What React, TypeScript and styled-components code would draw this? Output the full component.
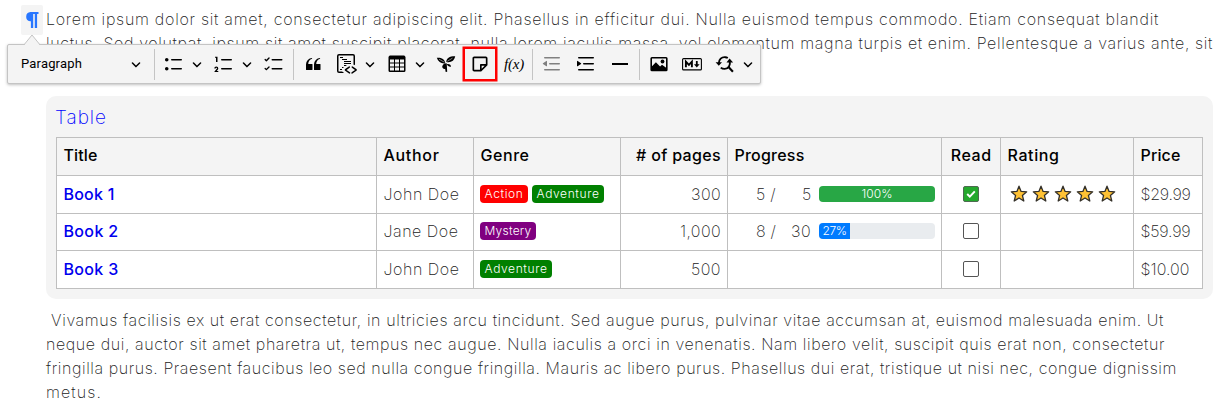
import React, { useLayoutEffect, useRef, useState } from "react";
import styled, { createGlobalStyle } from "styled-components";

const GlobalStyle = createGlobalStyle`
  *, *::before, *::after { box-sizing: border-box; }
  body {
    margin: 0;
    background: #fff;
    color: #222;
    font: 200 16px/24px Inter, "Open Sans", sans-serif;
    overflow: hidden;
  }
`;

/* ---------- text tracked out to a fixed measure ---------- */

const Tracked = styled.span`
  display: inline-block;
  white-space: pre;
`;

function Fit({ w, children }: { w: number; children: string }) {
  const ref = useRef<HTMLSpanElement>(null);
  const [spacing, setSpacing] = useState(0);
  useLayoutEffect(() => {
    if (ref.current) {
      const natural = ref.current.getBoundingClientRect().width;
      setSpacing((w - natural) / children.length);
    }
  }, [w, children]);
  return (
    <Tracked ref={ref} style={{ letterSpacing: spacing }}>
      {children}
    </Tracked>
  );
}

/* ---------- page ---------- */

const Page = styled.main`
  position: relative;
  width: 1218px;
  height: 403px;
  padding: 7px 5px 0 46px;
  overflow: hidden;
`;

const Paragraph = styled.p`
  margin: 0;
  display: flex;
  flex-direction: column;
  align-items: flex-start;
`;

const BlockHandle = styled.button`
  position: absolute;
  left: 21px;
  top: 5px;
  width: 22px;
  height: 30px;
  padding: 0;
  border: 0;
  border-radius: 2px;
  background: #f4f4f4;
  color: #2977ff;
  display: grid;
  place-items: center;
`;

/* ---------- toolbar ---------- */

const Toolbar = styled.div`
  position: absolute;
  left: 7px;
  top: 44px;
  width: 754px;
  height: 40px;
  display: flex;
  align-items: center;
  background: #f4f4f4;
  border: 1px solid #c4c4c4;
  border-radius: 2px;
  box-shadow: 0 1px 3px rgba(0, 0, 0, 0.25);
  color: #000;
`;

const Caret = styled.svg`
  position: absolute;
  left: 15px;
  top: -11px;
`;

const StyleSelect = styled.div`
  width: 144px;
  padding: 0 11px 0 13px;
  display: flex;
  align-items: center;
  justify-content: space-between;
  font: 400 13px/20px Roboto, sans-serif;
`;

const Tool = styled.button<{ $w?: number; $marked?: boolean; $dim?: boolean }>`
  flex: none;
  width: ${(p) => p.$w ?? 34}px;
  height: 34px;
  padding: 0;
  border: ${(p) => (p.$marked ? "2px solid #ff0000" : "0")};
  box-shadow: ${(p) => (p.$marked ? "0 0 0 0.5px #ff0000" : "none")};
  background: none;
  color: ${(p) => (p.$dim ? "#808080" : "#000")};
  display: flex;
  align-items: center;
  justify-content: center;
`;

const DropButton = styled.button<{ $w?: number }>`
  flex: none;
  width: ${(p) => p.$w ?? 16}px;
  height: 34px;
  padding: 0 0 0 1px;
  border: 0;
  background: none;
  color: #000;
  display: flex;
  align-items: center;
`;

const Divider = styled.span`
  flex: none;
  width: 1px;
  height: 31px;
  margin: 0 2px;
  background: #c4c4c4;
`;

const Formula = styled.span`
  padding-left: 1px;
  font: italic 400 15px/20px "Liberation Serif", serif;
  letter-spacing: -0.2px;
`;

const Icon = ({ d }: { d: string }) => (
  <svg width="20" height="20" viewBox="0 0 20 20" fill="currentColor">
    <path d={d} />
  </svg>
);

const Chevron = () => (
  <svg width="10" height="10" viewBox="0 0 10 10" fill="currentColor">
    <path d="M.941 4.523a.75.75 0 1 1 1.06-1.06l3.006 3.005 3.005-3.005a.75.75 0 1 1 1.06 1.06l-3.549 3.55a.75.75 0 0 1-1.168-.136L.941 4.523z" />
  </svg>
);

const bulleted =
  "M7 5.75c0 .414.336.75.75.75h9.5a.75.75 0 1 0 0-1.5h-9.5a.75.75 0 0 0-.75.75zm-6 0C1 4.784 1.777 4 2.75 4c.966 0 1.75.777 1.75 1.75 0 .966-.777 1.75-1.75 1.75C1.784 7.5 1 6.723 1 5.75zm6 9c0 .414.336.75.75.75h9.5a.75.75 0 1 0 0-1.5h-9.5a.75.75 0 0 0-.75.75zm-6 0c0-.966.777-1.75 1.75-1.75.966 0 1.75.777 1.75 1.75 0 .966-.777 1.75-1.75 1.75-.966 0-1.75-.777-1.75-1.75z";
const numbered =
  "M7 5.75c0 .414.336.75.75.75h9.5a.75.75 0 1 0 0-1.5h-9.5a.75.75 0 0 0-.75.75zM3.5 3v5H2V3.7H1v-1h2.5V3zM.343 17.857l2.59-3.257H2.92a.6.6 0 1 0-1.04 0H.302a2 2 0 1 1 3.995 0h-.001c-.048.405-.16.734-.333.988-.175.254-.59.692-1.244 1.312H4.3v1h-4l.043-.043zM7 14.75a.75.75 0 0 1 .75-.75h9.5a.75.75 0 1 1 0 1.5h-9.5a.75.75 0 0 1-.75-.75z";
const todo =
  "m2.315 14.705 2.224-2.24a.689.689 0 0 1 .963 0 .664.664 0 0 1 0 .949L2.865 16.07a.682.682 0 0 1-.112.089.647.647 0 0 1-.852-.051L.688 14.886a.635.635 0 0 1 0-.903.647.647 0 0 1 .91 0l.717.722zm5.185.045a.75.75 0 0 1 .75-.75h9.5a.75.75 0 1 1 0 1.5h-9.5a.75.75 0 0 1-.75-.75zM2.329 5.745l2.21-2.226a.689.689 0 0 1 .963 0 .664.664 0 0 1 0 .95L2.865 7.125a.682.682 0 0 1-.112.089.647.647 0 0 1-.852-.051L.688 5.94a.635.635 0 0 1 0-.903.647.647 0 0 1 .91 0l.73.708zM7.5 5.75A.75.75 0 0 1 8.25 5h9.5a.75.75 0 1 1 0 1.5h-9.5a.75.75 0 0 1-.75-.75z";
const quote =
  "M3 10.423a6.5 6.5 0 0 1 6.056-6.408l.038.67C6.448 5.423 5.354 7.663 5.22 10H9c.552 0 .5.432.5.986v4.511c0 .554-.448.503-1 .503h-5c-.552 0-.5-.449-.5-1.003v-4.574zm8 0a6.5 6.5 0 0 1 6.056-6.408l.038.67c-2.646.739-3.74 2.979-3.873 5.315H17c.552 0 .5.432.5.986v4.511c0 .554-.448.503-1 .503h-5c-.552 0-.5-.449-.5-1.003v-4.574z";
const codeBlock =
  "M12.87 12.61a.75.75 0 0 1-.089.976l-.085.07-3.154 2.254 3.412 2.414a.75.75 0 0 1 .237.95l-.057.095a.75.75 0 0 1-.95.237l-.096-.058-4.272-3.022-.003-1.223 4.01-2.867a.75.75 0 0 1 1.047.174zm2.795-.231.095.057 4.011 2.867-.003 1.224-4.272 3.022-.095.058a.75.75 0 0 1-.88-.151l-.07-.086-.058-.095a.75.75 0 0 1 .15-.88l.087-.07 3.412-2.414-3.154-2.253-.085-.071a.75.75 0 0 1 .862-1.207zM16 0a2 2 0 0 1 2 2v9.354l-.663-.492-.837-.001V2a.5.5 0 0 0-.5-.5H2a.5.5 0 0 0-.5.5v15a.5.5 0 0 0 .5.5h3.118L7.156 19H2a2 2 0 0 1-2-2V2a2 2 0 0 1 2-2h14zM5.009 15l.003 1H3v-1h2.009zm2.188-2-1.471 1H5v-1h2.197zM10 11v.095L8.668 12H7v-1h3zm4-2v1H7V9h7zm0-2v1H7V7h7zm-4-2v1H5V5h5zM6 3v1H3V3h3z";
const tableGrid =
  "M3 5.5v3h4v-3H3Zm0 4v3h4v-3H3Zm0 4v3h4v-3H3Zm5 3h4v-3H8v3Zm5 0h4v-3h-4v3Zm4-4v-3h-4v3h4Zm0-4v-3h-4v3h4Zm1.5 8A1.5 1.5 0 0 1 17 18H3a1.5 1.5 0 0 1-1.5-1.5V3c.222-.863 1.068-1.5 2-1.5h13c.932 0 1.778.637 2 1.5v13.5Zm-6.5-4v-3H8v3h4Zm0-4v-3H8v3h4Z";
const indentLines =
  "M2 3.75c0 .414.336.75.75.75h14.5a.75.75 0 1 0 0-1.5H2.75a.75.75 0 0 0-.75.75zm5 6c0 .414.336.75.75.75h9.5a.75.75 0 1 0 0-1.5h-9.5a.75.75 0 0 0-.75.75zM2.75 16.5h14.5a.75.75 0 1 0 0-1.5H2.75a.75.75 0 1 0 0 1.5z";
const indent =
  indentLines +
  "M1.632 6.95 5.02 9.358a.4.4 0 0 1-.013.661l-3.39 2.207A.4.4 0 0 1 1 11.892V7.275a.4.4 0 0 1 .632-.326z";
const outdent =
  indentLines +
  "M4.368 6.95.98 9.358a.4.4 0 0 0 .013.661l3.39 2.207A.4.4 0 0 0 5 11.892V7.275a.4.4 0 0 0-.632-.326z";

const PilcrowIcon = () => (
  <svg width="14" height="18" viewBox="0 0 14 18" fill="currentColor">
    <path d="M5.500 1H13.500v2.100h-1.400v14H9.800V3.100H8.200v14H5.900V10.300H5A4.700 4.700 0 0 1 5.500 1z" />
  </svg>
);

const LeavesIcon = () => (
  <svg width="20" height="20" viewBox="0 0 20 20" fill="currentColor">
    <path d="M.8 3.800C4.500 3.200 8.500 4.600 9.400 9.400 5.600 10 2.300 8.200.8 3.800z" />
    <path d="M10.300 8C10.400 4 13.600 2.200 19.200 2.300 18.300 6.800 14.800 9.100 10.300 8z" />
    <path d="M10.900 10c2.600-.4 4.100.8 4.100 2.700-1.900.3-3.500-.5-4.100-2.700z" />
    <path d="M6.200 12.800c.4-1.900 1.500-2.900 3-3.200l1.500-.3.500 8.400-1.500.4-.6-3.400c-1.200.6-2.500-.2-2.900-1.900z" />
    <path d="M3 5.200l5.400 3M11.300 7.300l5.200-3.200" stroke="#f4f4f4" strokeWidth=".5" />
  </svg>
);

const NoteIcon = () => (
  <svg width="20" height="20" viewBox="0 0 24 24" fill="currentColor">
    <path d="M19 3H5c-1.103 0-2 .897-2 2v14c0 1.103.897 2 2 2h8a.996.996 0 0 0 .707-.293l7-7a.997.997 0 0 0 .196-.293c.014-.022.022-.044.031-.067.04-.107.063-.219.066-.333L21 13V5c0-1.103-.897-2-2-2zM5 5h14v7h-6a1 1 0 0 0-1 1v6H5V5zm9 12.586V14h3.586L14 17.586z" />
  </svg>
);

const PictureIcon = () => (
  <svg width="20" height="20" viewBox="0 0 20 20">
    <rect x="2.200" y="3.700" width="15.600" height="12.800" rx=".7" fill="none" stroke="currentColor" strokeWidth="1.600" />
    <circle cx="13.500" cy="7.500" r="1.900" fill="currentColor" />
    <path d="M2.500 16v-3.300l4.400-4.500 4.200 4.300 1.900-1.700 4.500 3.200V16z" fill="currentColor" />
  </svg>
);

const MarkdownIcon = () => (
  <svg width="20" height="20" viewBox="0 0 20 20" fill="none" stroke="currentColor">
    <rect x=".6" y="4.600" width="18.800" height="11.300" rx="1" strokeWidth="1.100" />
    <path d="M3.900 13.200V7.600l3 3.300 3-3.300v5.600" strokeWidth="1.900" />
    <path d="M14.800 7v4.500" strokeWidth="1.800" />
    <path d="M12 10.200h5.600l-2.800 3.300z" fill="currentColor" stroke="none" />
  </svg>
);

const FindReplaceIcon = () => (
  <svg width="20" height="20" viewBox="0 0 20 20" fill="none" stroke="currentColor" strokeWidth="1.900">
    <path d="M3.800 9.200C3.900 5.300 6.500 2.900 10.300 3.200c1 .1 1.800.4 2.500.8" />
    <path d="M14.700 7.300c.9 3.600-1.200 7.500-5 7.600-1.600 0-2.900-.4-3.900-1.300" />
    <path d="M13.300 12.800l4.600 5" strokeWidth="2.100" />
    <path d="M.6 8.300h6.400L3.800 11.800zM11.500 8.400h6.600L14.600 4.400z" fill="currentColor" stroke="none" />
  </svg>
);

const RuleIcon = () => <Icon d="M2 9h16v2H2z" />;

/* ---------- collection table ---------- */

const Panel = styled.section`
  width: 1167px;
  height: 203px;
  margin: 41px 0 9px;
  padding: 9px 10px 0;
  border-radius: 10px;
  background: #f4f4f4;
`;

const Heading = styled.h2`
  margin: 0 0 0 -1px;
  height: 32px;
  font-weight: 200;
  font-size: 19px;
  line-height: 26px;
  color: #0000ff;
`;

const Table = styled.table`
  table-layout: fixed;
  width: 1147px;
  border-spacing: 0;
  border-top: 1px solid #bfbfbf;
  border-left: 1px solid #bfbfbf;
  background: #fff;
`;

const Row = styled.tr<{ $h: number }>`
  height: ${(p) => p.$h}px;
`;

const Col = styled.col<{ $w: number }>`
  width: ${(p) => p.$w}px;
`;

type Align = "left" | "right" | "center";

const Cell = styled.td<{ $align?: Align }>`
  padding: 0 6px 2px 6.5px;
  border-right: 1px solid #bfbfbf;
  border-bottom: 1px solid #bfbfbf;
  text-align: ${(p) => p.$align ?? "left"};
  vertical-align: middle;
  line-height: 22px;
  white-space: nowrap;
`;

const HeadCell = styled(Cell).attrs({ as: "th" })`
  padding-bottom: 3px;
  background: #f4f4f4;
  color: #000;
  font-weight: 500;
`;

const BookLink = styled.a`
  color: #0000ee;
  font-weight: 500;
`;

const Tags = styled.div`
  display: flex;
  gap: 4px;
  margin-left: -0.5px;
`;

const Tag = styled.span<{ $color: string }>`
  height: 18px;
  padding: 0 4.5px;
  border-radius: 4px;
  background: ${(p) => p.$color};
  color: #fff;
  font-weight: 300;
  font-size: 12px;
  line-height: 18px;
`;

const Progress = styled.div`
  display: grid;
  grid-template-columns: 41px 43px 116px;
  justify-content: end;
  align-items: center;
  text-align: right;
`;

const Track = styled.div`
  height: 16px;
  border-radius: 4px;
  overflow: hidden;
  background: #e9ecef;
`;

const Bar = styled.div<{ $color: string }>`
  height: 16px;
  background: ${(p) => p.$color};
  color: #fff;
  font-weight: 300;
  font-size: 12px;
  line-height: 16px;
  text-align: center;
`;

const Count = styled.span<{ $gap?: number }>`
  padding-right: ${(p) => p.$gap ?? 0}px;
`;

const Check = styled.span<{ $on: boolean }>`
  display: block;
  width: 16px;
  height: 16px;
  margin-left: 14.5px;
  border: 1px solid ${(p) => (p.$on ? "#4d6b50" : "#555")};
  border-radius: 2px;
  background: ${(p) => (p.$on ? "#24a82d" : "#fff")};

  svg { display: block; }
`;

const Stars = styled.div`
  display: flex;
  gap: 4px;
  padding-left: 2.5px;
`;

const Star = () => (
  <svg width="18" height="18" viewBox="0 0 18 18">
    <path
      d="M9 1.200l2.100 5.200 5.600.4-4.300 3.600 1.400 5.600L9 13l-4.800 3 1.400-5.600L1.300 6.800l5.600-.4z"
      fill="#ffc234"
      stroke="#33302a"
      strokeWidth="1.300"
      strokeLinejoin="round"
    />
  </svg>
);

type Label = [text: string, width: number];

interface Book {
  title: Label;
  author: Label;
  tags: { label: Label; color: string }[];
  pages: Label;
  progress?: { done: string; total: Label; percent: Label; color: string; value: number };
  read: boolean;
  stars: number;
  price: Label;
}

const books: Book[] = [
  {
    title: ["Book 1", 51],
    author: ["John Doe", 76],
    tags: [
      { label: ["Action", 39], color: "#ff0000" },
      { label: ["Adventure", 63], color: "#008000" },
    ],
    pages: ["300", 30],
    progress: { done: "5 /", total: ["5", 9], percent: ["100%", 31], color: "#28a745", value: 100 },
    read: true,
    stars: 5,
    price: ["$29.99", 50],
  },
  {
    title: ["Book 2", 55],
    author: ["Jane Doe", 75],
    tags: [{ label: ["Mystery", 47], color: "#800080" }],
    pages: ["1,000", 41],
    progress: { done: "8 /", total: ["30", 20], percent: ["27%", 24], color: "#007bff", value: 26.7 },
    read: false,
    stars: 0,
    price: ["$59.99", 50],
  },
  {
    title: ["Book 3", 55],
    author: ["John Doe", 76],
    tags: [{ label: ["Adventure", 63], color: "#008000" }],
    pages: ["500", 30],
    read: false,
    stars: 0,
    price: ["$10.00", 49],
  },
];

const columns: { label: Label; width: number; align?: Align }[] = [
  { label: ["Title", 34], width: 320 },
  { label: ["Author", 56], width: 97 },
  { label: ["Genre", 49], width: 147 },
  { label: ["# of pages", 85], width: 107, align: "right" },
  { label: ["Progress", 70], width: 214 },
  { label: ["Read", 41], width: 59, align: "center" },
  { label: ["Rating", 52], width: 133 },
  { label: ["Price", 40], width: 69 },
];

const rowHeights = [38, 37, 38];

const intro: Label[] = [
  ["Lorem ipsum dolor sit amet, consectetur adipiscing elit. Phasellus in efficitur dui. Nulla euismod tempus commodo. Etiam consequat blandit", 1113],
  ["luctus. Sed volutpat, ipsum sit amet suscipit placerat, nulla lorem iaculis massa, vel elementum magna turpis et enim. Pellentesque a varius ante, sit", 1167],
];

const outro: Label[] = [
  [" Vivamus facilisis ex ut erat consectetur, in ultricies arcu tincidunt. Sed augue purus, pulvinar vitae accumsan at, euismod malesuada enim. Ut", 1118],
  ["neque dui, auctor sit amet pharetra ut, tempus nec augue. Nulla iaculis a orci in venenatis. Nam libero velit, suscipit quis erat non, consectetur", 1119],
  ["fringilla purus. Praesent faucibus leo sed nulla congue fringilla. Mauris ac libero purus. Phasellus dui erat, tristique ut nisi nec, congue dignissim", 1131],
  ["metus.", 56],
];

const Text = ({ of: [text, w] }: { of: Label }) => <Fit w={w}>{text}</Fit>;

export default function App() {
  return (
    <>
      <GlobalStyle />
      <Page>
        <Paragraph>
          {intro.map((line) => <Text key={line[0]} of={line} />)}
        </Paragraph>

        <Panel>
          <Heading><Fit w={52}>Table</Fit></Heading>
          <Table>
            <colgroup>
              {columns.map((c) => <Col key={c.label[0]} $w={c.width} />)}
            </colgroup>
            <thead>
              <Row $h={38}>
                {columns.map((c) => (
                  <HeadCell key={c.label[0]} $align={c.align}><Text of={c.label} /></HeadCell>
                ))}
              </Row>
            </thead>
            <tbody>
              {books.map((b, i) => (
                <Row key={b.title[0]} $h={rowHeights[i]}>
                  <Cell><BookLink><Text of={b.title} /></BookLink></Cell>
                  <Cell><Text of={b.author} /></Cell>
                  <Cell>
                    <Tags>
                      {b.tags.map((t) => (
                        <Tag key={t.label[0]} $color={t.color}><Text of={t.label} /></Tag>
                      ))}
                    </Tags>
                  </Cell>
                  <Cell $align="right"><Text of={b.pages} /></Cell>
                  <Cell>
                    {b.progress && (
                      <Progress>
                        <Count><Fit w={20}>{b.progress.done}</Fit></Count>
                        <Count $gap={8}><Text of={b.progress.total} /></Count>
                        <Track>
                          <Bar $color={b.progress.color} style={{ width: `${b.progress.value}%` }}>
                            <Text of={b.progress.percent} />
                          </Bar>
                        </Track>
                      </Progress>
                    )}
                  </Cell>
                  <Cell>
                    <Check $on={b.read}>
                      {b.read && (
                        <svg width="14" height="14" viewBox="0 0 14 14" fill="none" stroke="#fff" strokeWidth="2">
                          <path d="M3.200 7l2.600 2.600 5-5.200" />
                        </svg>
                      )}
                    </Check>
                  </Cell>
                  <Cell>
                    <Stars>
                      {Array.from({ length: b.stars }, (_, n) => <Star key={n} />)}
                    </Stars>
                  </Cell>
                  <Cell><Text of={b.price} /></Cell>
                </Row>
              ))}
            </tbody>
          </Table>
        </Panel>

        <Paragraph>
          {outro.map((line) => <Text key={line[0]} of={line} />)}
        </Paragraph>

        <BlockHandle aria-label="Block"><PilcrowIcon /></BlockHandle>

        <Toolbar>
          <Caret width="18" height="12" viewBox="0 0 18 12">
            <path d="M1 11.500L9 1l8 10.500z" fill="#f4f4f4" />
            <path d="M1 10.800L9 1l8 9.800" fill="none" stroke="#c4c4c4" />
          </Caret>
          <StyleSelect>
            <Fit w={61}>Paragraph</Fit>
            <Chevron />
          </StyleSelect>
          <Divider />
          <Tool><Icon d={bulleted} /></Tool>
          <DropButton><Chevron /></DropButton>
          <Tool><Icon d={numbered} /></Tool>
          <DropButton><Chevron /></DropButton>
          <Tool><Icon d={todo} /></Tool>
          <Divider />
          <Tool><Icon d={quote} /></Tool>
          <Tool><Icon d={codeBlock} /></Tool>
          <DropButton><Chevron /></DropButton>
          <Tool><Icon d={tableGrid} /></Tool>
          <DropButton $w={15}><Chevron /></DropButton>
          <Tool><LeavesIcon /></Tool>
          <Tool $marked><NoteIcon /></Tool>
          <Tool $w={33}><Formula>f(x)</Formula></Tool>
          <Divider />
          <Tool $dim><Icon d={outdent} /></Tool>
          <Tool><Icon d={indent} /></Tool>
          <Tool><RuleIcon /></Tool>
          <Divider />
          <Tool><PictureIcon /></Tool>
          <Tool $w={32}><MarkdownIcon /></Tool>
          <Tool><FindReplaceIcon /></Tool>
          <DropButton><Chevron /></DropButton>
        </Toolbar>
      </Page>
    </>
  );
}
